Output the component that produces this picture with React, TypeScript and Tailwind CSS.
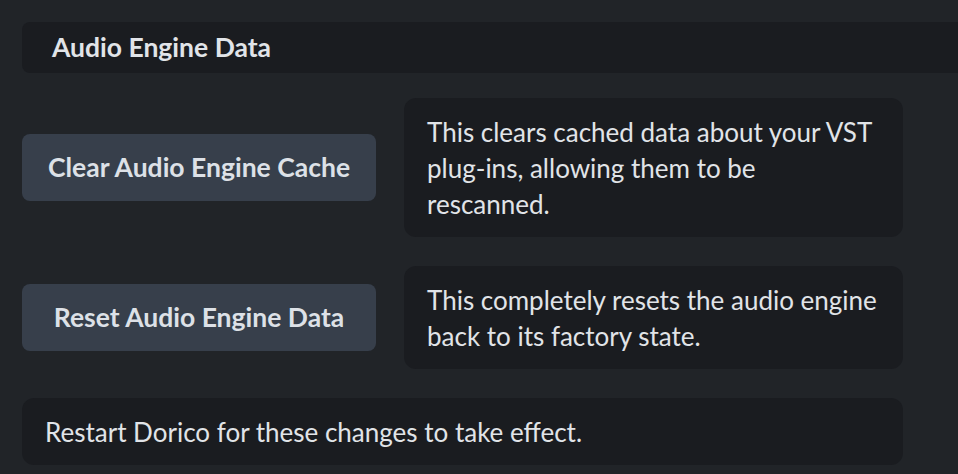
const rows = [
  {
    label: "Clear Audio Engine Cache",
    desc: (
      <>
        This clears cached data about your VST plug-ins, allowing them to be
        <br />
        rescanned.
      </>
    ),
  },
  {
    label: "Reset Audio Engine Data",
    desc: <>This completely resets the audio engine back to its factory state.</>,
  },
];

export default function App() {
  return (
    <div
      className="h-[474px] w-full overflow-hidden bg-[#212428] pt-[22px] text-[#e1e4e8]"
      style={{ fontFamily: "Lato, 'Open Sans', sans-serif" }}
    >
      {/* Section header */}
      <div className="ml-[22px] flex h-[51px] items-center rounded-l-lg bg-[#1a1c20] pl-[30px]">
        <h2 className="text-[26.5px] font-bold leading-none">Audio Engine Data</h2>
      </div>

      <div className="mt-[25px] flex w-[903px] flex-col gap-[29px] pl-[22px]">
        {rows.map((row) => (
          <div key={row.label} className="flex items-center gap-[28px]">
            <button className="h-[67px] w-[354px] shrink-0 rounded-lg bg-[#373f4b] text-[26.5px] font-bold text-[#dde1e7]">
              {row.label}
            </button>
            <p className="w-[499px] rounded-xl bg-[#1a1c20] py-[15.5px] pl-[23px] pr-[12px] text-[26px] leading-[36px]">
              {row.desc}
            </p>
          </div>
        ))}

        <p className="rounded-xl bg-[#1a1c20] px-[23px] py-[15.5px] text-[26px] leading-[36px]">
          Restart Dorico for these changes to take effect.
        </p>
      </div>
    </div>
  );
}
